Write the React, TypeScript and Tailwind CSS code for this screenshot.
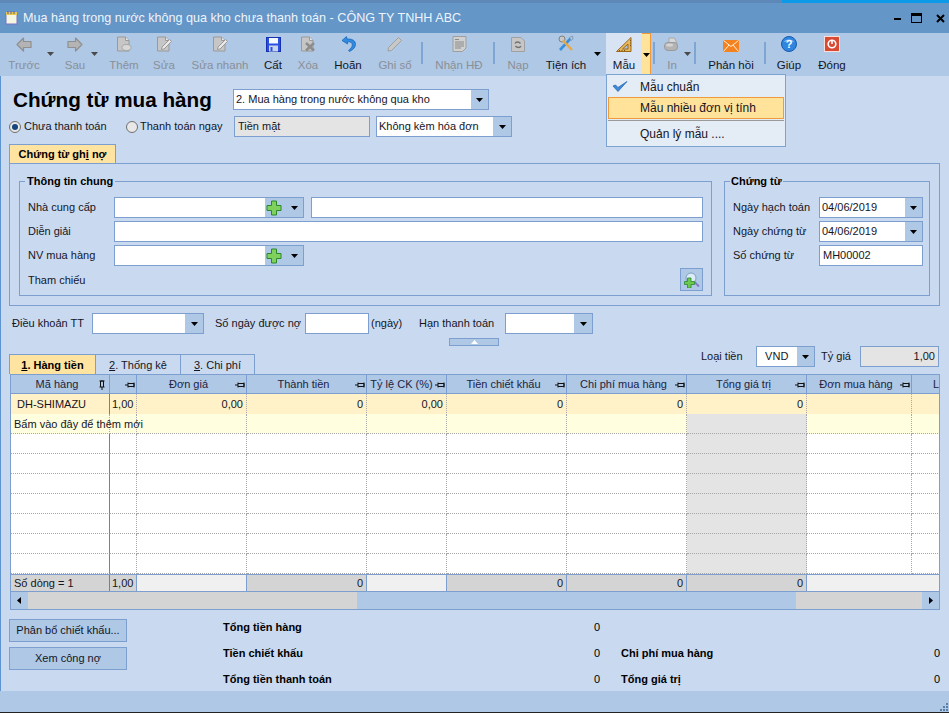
import React from 'react';

const font = { fontFamily: '"Liberation Sans", Arial, sans-serif' };

const Caret = ({ dim = false }: { dim?: boolean }) => (
  <svg width="7" height="4" viewBox="0 0 7 4"><path d="M0 0h7L3.500 4z" fill={dim ? '#4a4a4a' : '#000'} /></svg>
);

// toolbar icons
const ArrowIcon = ({ flip = false }: { flip?: boolean }) => (
  <svg width="16" height="15" viewBox="0 0 16 15" style={flip ? { transform: 'scaleX(-1)' } : undefined}>
    <path d="M7.500 1 1 7.500 7.500 14V10.500H15V4.500H7.500z" fill="#b4b4b4" stroke="#8f8f8f" strokeWidth="1.200" strokeLinejoin="round" />
  </svg>
);
const DocBase = ({ children }: { children?: React.ReactNode }) => (
  <svg width="16" height="16" viewBox="0 0 16 16">
    <path d="M1.500 1H9.500L13 4.500V15H1.500z" fill="#c6c6c6" stroke="#9a9a9a" />
    <path d="M9.500 1V4.500H13" fill="#e4e4e4" stroke="#9a9a9a" />
    {children}
  </svg>
);
const AddDocIcon = () => (
  <DocBase>
    <ellipse cx="10.500" cy="11.500" rx="4.500" ry="3" fill="#d8d8d8" stroke="#a4a4a4" />
  </DocBase>
);
const EditDocIcon = () => (
  <DocBase>
    <path d="M6 11 13.500 3.500 15.500 5.500 8 13 5.500 13.500z" fill="#e8e8e8" stroke="#9a9a9a" />
  </DocBase>
);
const FloppyIcon = () => (
  <svg width="15" height="15" viewBox="0 0 15 15">
    <rect x="0.500" y="0.500" width="14" height="14" fill="#2a50e0" stroke="#1630b0" />
    <rect x="3" y="1" width="9" height="5.500" fill="#f4f8ff" />
    <rect x="3" y="8.500" width="9" height="6" fill="#c8d4ec" />
    <rect x="4.500" y="10" width="2" height="4" fill="#2a50e0" />
  </svg>
);
const DeleteDocIcon = () => (
  <DocBase>
    <path d="M6 7 14 14.500M14 7 6 14.500" stroke="#8c8c8c" strokeWidth="2.400" />
  </DocBase>
);
const UndoIcon = () => (
  <svg width="15" height="16" viewBox="0 0 15 16">
    <path d="M5.500 0.500 1 4.500 6.500 8V5.800C10 5.500 11.500 7 11.300 9.300 11.100 11.200 9.500 12.700 7.500 14.500L8.500 15.500C12 13.800 14.500 11.500 14.500 8.300 14.500 4.500 11 2.700 6 3z" fill="#2f8ae0" stroke="#1560b8" strokeWidth="0.700" strokeLinejoin="round" />
  </svg>
);
const PencilIcon = () => (
  <svg width="16" height="16" viewBox="0 0 16 16">
    <path d="M1.500 11.500 11.500 1.500 14.500 4.500 4.500 14.500 1 15z" fill="#c8c8c8" stroke="#a0a0a0" />
  </svg>
);
const InvoiceIcon = () => (
  <svg width="15" height="16" viewBox="0 0 15 16">
    <path d="M1 0.500H14V12L10.500 15.500H1z" fill="#d0d0d0" stroke="#9e9e9e" />
    <path d="M3 3.500H7M3 6H12M3 8H12M3 10H12M3 12H9" stroke="#8a8a8a" />
  </svg>
);
const ReloadDocIcon = () => (
  <svg width="14" height="15" viewBox="0 0 14 15">
    <path d="M0.500 0.500H10L13.500 4V14.500H0.500z" fill="#c6c6c6" stroke="#a0a0a0" />
    <path d="M4 6.500C5 4.500 8 4.500 9.500 6.500M10 9C9 11 6 11 4.500 9" fill="none" stroke="#707070" strokeWidth="1.400" />
  </svg>
);
const ToolsIcon = () => (
  <svg width="16" height="17" viewBox="0 0 16 17">
    <path d="M2 15 12.500 3.500" stroke="#3a90dc" strokeWidth="2.600" />
    <path d="M11.500 2.500 14.500 1 15 4 13 5.500z" fill="#b0c4da" stroke="#6888a8" strokeWidth="0.600" />
    <circle cx="4" cy="4" r="3" fill="#c8c8c8" stroke="#808080" />
    <path d="M5 5.500 14 15" stroke="#e8a848" strokeWidth="2.400" />
  </svg>
);
const RulerIcon = () => (
  <svg width="16" height="15" viewBox="0 0 16 15">
    <path d="M15 0.500V14.500H0.500z" fill="#e8b860" stroke="#9a6818" />
    <path d="M12 7V12H6.500z" fill="#acc8e6" stroke="#9a6818" />
    <path d="M3.500 13V14M6 13V14M8.500 13V14M14 3.500H15M14 6H15M14 8.500H15" stroke="#7a5010" />
  </svg>
);
const PrinterIcon = () => (
  <svg width="16" height="15" viewBox="0 0 16 15">
    <path d="M5 1H10.500L13 6H5z" fill="#d8d8d8" stroke="#a8a8a8" />
    <rect x="0.500" y="5.500" width="13" height="8" rx="3.500" fill="#b4b4b4" stroke="#9a9a9a" />
    <ellipse cx="5.500" cy="8" rx="3.500" ry="1.500" fill="#d4d4d4" />
  </svg>
);
const MailIcon = () => (
  <svg width="16" height="12" viewBox="0 0 16 12">
    <rect width="16" height="12" fill="#f58220" />
    <path d="M0.500 0.500 8 6.500 15.500 0.500M0.500 11.500 6 5M15.500 11.500 10 5" fill="none" stroke="#fff0d8" />
  </svg>
);
const HelpIcon = () => (
  <svg width="16" height="16" viewBox="0 0 16 16">
    <circle cx="8" cy="8" r="7.500" fill="#2f86e0" stroke="#1a5aa8" />
    <path d="M3 6C4 2.500 12 2.500 13 6 10 4.500 6 4.500 3 6z" fill="#9cc8f4" />
    <text x="8" y="12" textAnchor="middle" fontSize="11" fontWeight="700" fill="#fff" fontFamily="Liberation Sans">?</text>
  </svg>
);
const CloseIcon = () => (
  <svg width="16" height="16" viewBox="0 0 16 16">
    <rect x="0.500" y="0.500" width="15" height="15" fill="#d84a34" stroke="#f8e0d8" />
    <circle cx="8" cy="8" r="3.800" fill="none" stroke="#fff" strokeWidth="1.600" />
    <path d="M8 4V8" stroke="#fff" strokeWidth="1.600" />
  </svg>
);

const Tool = ({ w, ml = '', label, icon, dim = false }: { w: string; ml?: string; label: string; icon: React.ReactNode; dim?: boolean }) => (
  <div className={`${w} ${ml} flex h-full shrink-0 flex-col items-center`}>
    <div className="flex h-[19px] items-end justify-center">{icon}</div>
    <div className={`mt-[4px] whitespace-nowrap leading-[18px] ${dim ? 'text-[#8b8f96]' : 'text-[#15151f]'}`}>{label}</div>
  </div>
);

const ToolCaret = ({ w, ml = '', dim = false }: { w: string; ml?: string; dim?: boolean }) => (
  <div className={`${w} ${ml} flex h-full shrink-0 justify-center pt-[19px]`}><div className="flex h-[4px]"><Caret dim={dim} /></div></div>
);

const Sep = ({ ml = '' }: { ml?: string }) => <div className={`${ml} mt-[9px] h-[22px] w-[2px] shrink-0 bg-[#7fa5d2]`} />;

const Combo = ({ w, h = 'h-[21px]', value = '', btn = 'w-[17px]' }: { w: string; h?: string; value?: string; btn?: string }) => (
  <div className={`${w} ${h} flex shrink-0 border border-[#7d9fcf] bg-white`}>
    <div className="flex-1 overflow-hidden whitespace-pre pl-[2px] leading-[19px]">{value}</div>
    <div className={`${btn} flex items-center justify-center bg-[#aec8e6]`}><Caret /></div>
  </div>
);

const Plus = () => (
  <svg width="16" height="16" viewBox="0 0 16 16">
    <path d="M5.500 1H10.500V5.500H15V10.500H10.500V15H5.500V10.500H1V5.500H5.500z" fill="#7fd05c" stroke="#2a8a2a" />
  </svg>
);

const ComboAdd = () => (
  <div className="flex h-[21px] w-[190px] shrink-0 border border-[#7d9fcf] bg-white">
    <div className="flex-1" />
    <div className="flex w-[38px] items-center bg-[#aec8e6] pl-[1px]">
      <Plus />
      <div className="ml-[9px] flex"><Caret /></div>
    </div>
  </div>
);

const Input = ({ w, value = '', gray = false, right = false }: { w: string; value?: string; gray?: boolean; right?: boolean }) => (
  <div className={`${w} h-[21px] shrink-0 border border-[#7d9fcf] px-[3px] leading-[19px] ${gray ? 'bg-[#e4e4e4]' : 'bg-white'} ${right ? 'text-right' : ''}`}>{value}</div>
);

const Radio = ({ on = false }: { on?: boolean }) => (
  <div className="flex h-[12px] w-[12px] items-center justify-center rounded-full border border-[#6f6f6f] bg-[#e8e8e8]">
    {on && <div className="h-[6px] w-[6px] rounded-full bg-[#16467c]" />}
  </div>
);

const Pin = ({ up = false }: { up?: boolean }) => (
  <svg width="10" height="10" viewBox="0 0 10 10" className={`absolute top-[5px] ${up ? 'right-[2px]' : 'right-[1px]'}`} style={up ? { transform: 'rotate(-90deg)' } : undefined}>
    <path d="M0 5H3M3 2.500V7.500M3 3.500H9V6.500H3M9 2.500V7.500" fill="none" stroke="#111" />
  </svg>
);

const cols = 'grid grid-cols-[99px_27px_110px_120px_80px_120px_120px_120px_105px_28px]';

const headers = [
  { t: 'Mã hàng', up: true },
  { t: '' },
  { t: 'Đơn giá' },
  { t: 'Thành tiền' },
  { t: 'Tỷ lệ CK (%)', tight: true },
  { t: 'Tiền chiết khấu' },
  { t: 'Chi phí mua hàng' },
  { t: 'Tổng giá trị' },
  { t: 'Đơn mua hàng' },
];

const Dotted = 'border-b border-r border-dotted border-[#a8a8a8]';

const App = () => {
  const emptyRows = [0, 1, 2, 3, 4, 5, 6];
  const colIdx = [0, 1, 2, 3, 4, 5, 6, 7, 8, 9];

  return (
    <div className="relative flex h-[713px] w-[949px] flex-col overflow-hidden bg-[#c9daf0] text-[11px] text-[#15151f]" style={font}>
      {/* title bar */}
      <div className="flex h-[3px] shrink-0 justify-end bg-[#5d88b8]">
        <div className="h-full w-[167px] bg-[#0a9ae8]" />
      </div>
      <div className="flex h-[30px] shrink-0 items-center bg-[#6496c8] pl-[5px] text-[12.600px] text-[#eef4fb]">
        <svg width="13" height="14" viewBox="0 0 13 14">
          <rect x="1" y="3" width="11" height="10" fill="#f4f6e0" stroke="#7a70c8" />
          <rect x="1" y="1" width="11" height="3" fill="#e8c850" />
          <path d="M3 0V3M6 0V3M9 0V3" stroke="#6a5a90" />
        </svg>
        <div className="ml-[5px]">Mua hàng trong nước không qua kho chưa thanh toán - CÔNG TY TNHH ABC</div>
        <div className="ml-auto flex items-center pr-[4px]">
          <div className="mt-[2px] h-[2px] w-[7px] bg-black" />
          <div className="ml-[10px] h-[10px] w-[11px] border border-t-[3px] border-black" />
          <svg className="ml-[14px]" width="9" height="9" viewBox="0 0 9 9"><path d="M1 1 8 8M8 1 1 8" stroke="#000" strokeWidth="2" /></svg>
        </div>
      </div>

      {/* toolbar */}
      <div className="flex h-[43px] shrink-0 bg-[#aec8e6] pl-[4px] text-[11.500px]">
        <Tool w="w-[40px]" label="Trước" dim icon={<ArrowIcon />} />
        <ToolCaret w="w-[12px]" dim />
        <Tool w="w-[30px]" ml="ml-[4px]" label="Sau" dim icon={<ArrowIcon flip />} />
        <ToolCaret w="w-[9px]" dim />
        <Tool w="w-[50px]" label="Thêm" dim icon={<AddDocIcon />} />
        <Tool w="w-[30px]" label="Sửa" dim icon={<EditDocIcon />} />
        <Tool w="w-[82px]" label="Sửa nhanh" dim icon={<EditDocIcon />} />
        <Tool w="w-[24px]" label="Cất" icon={<FloppyIcon />} />
        <Tool w="w-[46px]" label="Xóa" dim icon={<DeleteDocIcon />} />
        <Tool w="w-[34px]" label="Hoãn" icon={<UndoIcon />} />
        <Tool w="w-[52px]" ml="ml-[4px]" label="Ghi sổ" dim icon={<PencilIcon />} />
        <Sep />
        <Tool w="w-[68px]" ml="ml-[2px]" label="Nhận HĐ" dim icon={<InvoiceIcon />} />
        <Sep />
        <Tool w="w-[46px]" label="Nạp" dim icon={<ReloadDocIcon />} />
        <Tool w="w-[50px]" label="Tiện ích" icon={<ToolsIcon />} />
        <ToolCaret w="w-[12px]" />
        <div className="ml-[3px] h-full w-[36px] shrink-0 bg-[#d8e4f4]">
          <Tool w="w-[36px]" label="Mẫu" icon={<RulerIcon />} />
        </div>
        <div className="h-full w-[9px] shrink-0 border-r border-t border-[#f09a3c] bg-[#ffe39b]">
          <ToolCaret w="w-[8px]" />
        </div>
        <Sep ml="ml-[2px]" />
        <Tool w="w-[24px]" ml="ml-[5px]" label="In" dim icon={<PrinterIcon />} />
        <ToolCaret w="w-[6px]" dim />
        <Sep ml="ml-[4px]" />
        <Tool w="w-[66px]" ml="ml-[2px]" label="Phản hồi" icon={<MailIcon />} />
        <Sep />
        <Tool w="w-[46px]" label="Giúp" icon={<HelpIcon />} />
        <Tool w="w-[40px]" label="Đóng" icon={<CloseIcon />} />
      </div>

      {/* content */}
      <div className="flex-1 border-l border-[#5d94d0]">
        <div className="mt-[13px] flex h-[21px] items-center">
          <div className="w-[219px] whitespace-nowrap pl-[12px] text-[20.700px] font-bold leading-[21px] text-black">Chứng từ mua hàng</div>
          <div className="ml-[13px]"><Combo w="w-[256px]" value="2. Mua hàng trong nước không qua kho" /></div>
        </div>
        <div className="mt-[6px] flex h-[21px] items-center">
          <div className="ml-[8px]"><Radio on /></div>
          <div className="ml-[3px] w-[102px]">Chưa thanh toán</div>
          <Radio />
          <div className="ml-[2px] w-[94px]">Thanh toán ngay</div>
          <Input w="w-[136px]" gray value="Tiền mặt" />
          <div className="ml-[6px]"><Combo w="w-[136px]" value="Không kèm hóa đơn" btn="w-[18px]" /></div>
        </div>

        <div className="ml-[8px] mt-[7px] h-[19px] w-[107px] border border-b-0 border-[#7d9fcf] bg-[#ffe3a0] text-center font-bold leading-[18px] text-black">
          Chứng từ gh<u>i</u> nợ
        </div>
        <div className="ml-[8px] flex h-[143px] w-[931px] gap-[12px] border border-[#7d9fcf] pl-[9px] pt-[17px]">
          <div className="relative h-[115px] w-[693px] shrink-0 border border-[#7d9fcf] pl-[8px] pr-[8px] pt-[15px]">
            <div className="absolute left-[5px] top-[-9px] bg-[#c9daf0] px-[2px] font-bold text-black">Thông tin chung</div>
            <div className="flex items-center">
              <div className="w-[86px]">Nhà cung cấp</div>
              <ComboAdd />
              <div className="ml-[7px]"><Input w="w-[392px]" /></div>
            </div>
            <div className="mt-[3px] flex items-center">
              <div className="w-[86px]">Diễn giải</div>
              <Input w="w-[589px]" />
            </div>
            <div className="mt-[3px] flex items-center">
              <div className="w-[86px]">NV mua hàng</div>
              <ComboAdd />
            </div>
            <div className="mt-[2px] flex h-[23px] items-center justify-between">
              <div className="pt-[1px]">Tham chiếu</div>
              <div className="flex h-[23px] w-[23px] items-center justify-center border border-[#7d9fcf] bg-[#aec8e6]">
                <svg width="16" height="16" viewBox="0 0 16 16">
                  <circle cx="7" cy="6" r="5" fill="#dcecf8" stroke="#7aa0c0" />
                  <path d="M10.500 10 15 14.500" stroke="#8a78d0" strokeWidth="2" />
                  <path d="M3.500 6H7V9.500H10.500V12.500H7V16H3.500V12.500H0.500V9.500H3.500z" fill="#6cc850" stroke="#2a8a2a" strokeWidth="0.800" />
                </svg>
              </div>
            </div>
          </div>
          <div className="relative h-[115px] w-[206px] shrink-0 border border-[#7d9fcf] pl-[8px] pt-[15px]">
            <div className="absolute left-[5px] top-[-9px] bg-[#c9daf0] px-[1px] font-bold text-black">Chứng từ</div>
            <div className="flex items-center">
              <div className="w-[86px]">Ngày hạch toán</div>
              <Combo w="w-[104px]" value="04/06/2019" />
            </div>
            <div className="mt-[3px] flex items-center">
              <div className="w-[86px]">Ngày chứng từ</div>
              <Combo w="w-[104px]" value="04/06/2019" />
            </div>
            <div className="mt-[3px] flex items-center">
              <div className="w-[86px]">Số chứng từ</div>
              <Input w="w-[104px]" value="MH00002" />
            </div>
          </div>
        </div>

        <div className="mt-[7px] flex h-[21px] items-center">
          <div className="w-[91px] pl-[11px]">Điều khoản TT</div>
          <Combo w="w-[112px]" btn="w-[18px]" />
          <div className="ml-[11px] w-[90px]">Số ngày được nợ</div>
          <Input w="w-[64px]" />
          <div className="ml-[2px] w-[48px]">(ngày)</div>
          <div className="w-[86px]">Hạn thanh toán</div>
          <Combo w="w-[88px]" btn="w-[18px]" />
        </div>

        <div className="ml-[448px] mt-[4px] flex h-[8px] w-[50px] items-center justify-center border border-[#7d9fcf] bg-[#aec8e6]">
          <svg width="7" height="4" viewBox="0 0 7 4"><path d="M0 4h7L3.500 0z" fill="#fff" /></svg>
        </div>

        <div className="flex h-[28px] justify-between pr-[10px]">
          <div className="ml-[8px] flex items-end">
            <div className="h-[20px] w-[87px] border border-b-0 border-[#7d9fcf] bg-[#ffe3a0] text-center font-bold leading-[20px] text-black"><u>1</u>. Hàng tiền</div>
            <div className="h-[20px] w-[85px] border-y border-r border-b-0 border-[#7d9fcf] text-center leading-[20px]"><u>2</u>. Thống kê</div>
            <div className="h-[20px] w-[74px] border-y border-r border-b-0 border-[#7d9fcf] text-center leading-[20px]"><u>3</u>. Chi phí</div>
          </div>
          <div className="flex h-[21px] items-center">
            <div className="w-[55px]">Loại tiền</div>
            <Combo w="w-[59px]" btn="w-[17px]" value="  VND" />
            <div className="ml-[6px] w-[39px]">Tỷ giá</div>
            <Input w="w-[79px]" gray right value="1,00" />
          </div>
        </div>

        {/* grid */}
        <div className="ml-[9px] flex h-[236px] w-[930px] flex-col overflow-hidden border-x border-b border-[#7d9fcf]">
          <div className={`${cols} h-[20px] shrink-0 bg-[#aec8e6] text-[#23233f]`}>
            {headers.map((h, i) => (
              <div key={i} className={`relative whitespace-nowrap border-r border-y border-[#7d9fcf] leading-[18px] ${h.tight ? 'pr-[10px] text-center' : 'pr-[6px] text-center'}`}>
                {h.t}
                <Pin up={h.up} />
              </div>
            ))}
            <div className="overflow-hidden border-y border-[#7d9fcf] pl-[21px] leading-[18px]">L</div>
          </div>

          <div className={`${cols} h-[20px] shrink-0 bg-[#fff2c8]`}>
            <div className="border-b border-r border-b-[#a8a8a8] border-r-[#808080] border-dotted pl-[6px] leading-[20px]" style={{ borderRightStyle: 'solid' }}>DH-SHIMAZU</div>
            <div className={`${Dotted} pl-[2px] leading-[20px]`}>1,00</div>
            <div className={`${Dotted} pr-[3px] text-right leading-[20px]`}>0,00</div>
            <div className={`${Dotted} pr-[3px] text-right leading-[20px]`}>0</div>
            <div className={`${Dotted} pr-[3px] text-right leading-[20px]`}>0,00</div>
            <div className={`${Dotted} pr-[3px] text-right leading-[20px]`}>0</div>
            <div className={`${Dotted} pr-[3px] text-right leading-[20px]`}>0</div>
            <div className={`${Dotted} pr-[3px] text-right leading-[20px]`}>0</div>
            <div className={Dotted} />
            <div className={Dotted} />
          </div>

          <div className={`${cols} relative h-[20px] shrink-0 bg-[#ffffe0]`}>
            {colIdx.map((c) => (
              <div key={c} className={`${Dotted} ${c === 7 ? 'bg-[#e4e4e4]' : ''}`} />
            ))}
            <div className="absolute left-[3px] top-0 leading-[20px]">Bấm vào đây để thêm mới</div>
          </div>

          {emptyRows.map((r) => (
            <div key={r} className={`${cols} h-[20px] shrink-0 bg-white`}>
              {colIdx.map((c) => (
                <div
                  key={c}
                  className={`${Dotted} ${c === 7 ? 'bg-[#e4e4e4]' : ''}`}
                  style={c === 0 ? { borderRightStyle: 'solid', borderRightColor: '#808080' } : undefined}
                />
              ))}
            </div>
          ))}

          <div className={`${cols} h-[18px] shrink-0 border-y border-[#7d9fcf]`}>
            <div className="border-r border-[#808080] bg-[#d4d4d4] pl-[3px] leading-[16px]">Số dòng = 1</div>
            <div className="border-r border-[#7d9fcf] bg-[#d4d4d4] pl-[2px] leading-[16px]">1,00</div>
            <div className="border-r border-[#7d9fcf] bg-[#f0f0f0]" />
            <div className="border-r border-[#7d9fcf] bg-[#d4d4d4] pr-[3px] text-right leading-[16px]">0</div>
            <div className="border-r border-[#7d9fcf] bg-[#f0f0f0]" />
            <div className="border-r border-[#7d9fcf] bg-[#d4d4d4] pr-[3px] text-right leading-[16px]">0</div>
            <div className="border-r border-[#7d9fcf] bg-[#d4d4d4] pr-[3px] text-right leading-[16px]">0</div>
            <div className="border-r border-[#7d9fcf] bg-[#d4d4d4] pr-[3px] text-right leading-[16px]">0</div>
            <div className="bg-[#f0f0f0]" />
            <div className="bg-[#f0f0f0]" />
          </div>

          <div className="flex h-[17px] shrink-0 bg-[#aec8e6]">
            <div className="flex w-[17px] items-center justify-center">
              <svg width="4" height="7" viewBox="0 0 4 7"><path d="M4 0V7L0 3.500z" fill="#000" /></svg>
            </div>
            <div className="w-[329px] bg-[#d4d4d4]" />
            <div className="w-[440px]" />
            <div className="w-[126px] bg-[#d4d4d4]" />
            <div className="flex w-[17px] items-center justify-center">
              <svg width="4" height="7" viewBox="0 0 4 7"><path d="M0 0V7L4 3.500z" fill="#000" /></svg>
            </div>
          </div>
        </div>

        {/* bottom */}
        <div className="flex h-[81px]">
          <div className="ml-[8px] w-[118px] pt-[9px]">
            <div className="h-[23px] border border-[#7d9fcf] bg-[#aec8e6] text-center leading-[21px]">Phân bổ chiết khấu...</div>
            <div className="mt-[5px] h-[23px] border border-[#7d9fcf] bg-[#aec8e6] text-center leading-[21px]">Xem công nợ</div>
          </div>
          <div className="ml-[96px] grid h-[78px] grid-cols-[377px_319px] gap-x-[21px] pt-[4px] text-black">
            <div className="flex h-[26px] items-center justify-between"><b>Tổng tiền hàng</b><span>0</span></div>
            <div />
            <div className="flex h-[26px] items-center justify-between"><b>Tiền chiết khấu</b><span>0</span></div>
            <div className="flex h-[26px] items-center justify-between"><b>Chi phí mua hàng</b><span>0</span></div>
            <div className="flex h-[26px] items-center justify-between"><b>Tổng tiền thanh toán</b><span>0</span></div>
            <div className="flex h-[26px] items-center justify-between"><b>Tổng giá trị</b><span>0</span></div>
          </div>
        </div>
      </div>

      <div className="relative h-[21px] shrink-0 bg-[#aec8e6]">
        <svg className="absolute bottom-[1px] right-[1px]" width="9" height="9" viewBox="0 0 9 9">
          <path d="M7 1h2v2H7zM4 4h2v2H4zM7 4h2v2H7zM1 7h2v2H1zM4 7h2v2H4zM7 7h2v2H7z" fill="#5a7fa8" />
        </svg>
      </div>
      <div className="h-[1px] shrink-0 bg-[#222]" />

      {/* dropdown menu */}
      <div className="absolute left-[606px] top-[74px] h-[73px] w-[180px] border border-[#7da3d3] bg-[#e4ecf6] p-[1px] text-[12px]">
        <div className="flex h-[21px] items-center">
          <svg className="ml-[4px]" width="16" height="13" viewBox="0 0 16 13"><path d="M1 6 6 11.500 15 1.500 6 7.500 3.500 5z" fill="#3f8ad8" stroke="#2a6ab8" strokeWidth="0.800" /></svg>
          <div className="ml-[12px]">Mẫu chuẩn</div>
        </div>
        <div className="flex h-[22px] items-center border border-[#f09a3c] bg-[#ffe39b] pl-[31px]">Mẫu nhiều đơn vị tính</div>
        <div className="mt-[1px] h-[1px] bg-[#9a9a9a]" />
        <div className="flex h-[25px] items-center pl-[32px]">Quản lý mẫu ....</div>
      </div>
    </div>
  );
};

export default App;
